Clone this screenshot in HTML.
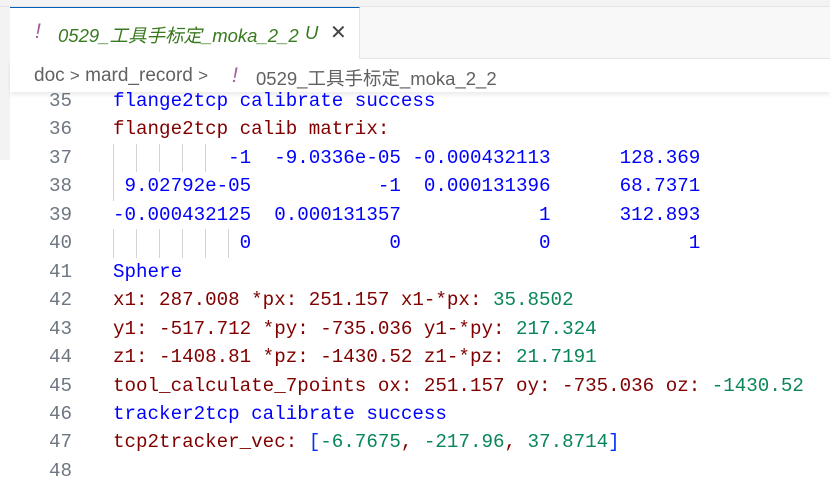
<!DOCTYPE html>
<html><head><meta charset="utf-8"><style>
body{margin:0;width:830px;height:480px;overflow:hidden;background:#fff;position:relative;font-family:"Liberation Sans","Noto Sans CJK SC",sans-serif}
.top{position:absolute;left:0;top:0;width:830px;height:6px;background:#f3f3f3;border-bottom:1px solid #e5e5e5}
.tabs{position:absolute;left:0;top:7px;width:830px;height:51px;background:#f8f8f8;border-bottom:1px solid #e5e5e5}
.tab{position:absolute;left:10px;top:0;width:350px;height:52px;background:#fff;border-top:1px solid #005fb8;border-right:1px solid #e5e5e5;box-sizing:border-box}
.tab .t{position:absolute;left:48px;top:14px;font-size:18.5px;font-style:italic;color:#387a1f;white-space:nowrap}
.ex{color:#a45ba0;font-style:italic;font-size:21px;position:absolute}
.x{position:absolute;left:320px;top:12px;font-size:20px;color:#444}
.bc{position:absolute;left:10px;top:59px;width:820px;height:33px;background:#fff;box-shadow:0 3px 4px rgba(0,0,0,0.08);font-size:19px;color:#616161;white-space:nowrap}
.left{position:absolute;left:0;top:7px;width:10px;height:153px;background:#f3f3f3}
.code{position:absolute;left:0;top:87px;font-family:"Liberation Mono",monospace;font-size:19.2px}
.ln{position:relative;height:28.46px;line-height:28.46px;white-space:pre}
.n{position:absolute;right:0;left:0;width:72px;text-align:right;color:#6e7681}
.c{position:absolute;left:113px}
.g{position:absolute;top:0;width:1px;height:28.46px;background:#d3d3d3}
.b{color:#0000ff}.r{color:#800000}.gr{color:#098658}.bk{color:#0431fa}
.ch{font-size:17px;color:#616161}
</style></head><body>
<div class="top"></div>
<div class="tabs"><div class="tab"><span class="ex" style="left:25px;top:12px">!</span><span class="t">0529_工具手标定_moka_2_2</span><span class="t" style="left:295px">U</span><span class="x">✕</span></div></div>
<div class="left"></div>
<div class="bc"><span style="position:absolute;left:24px;top:6px">doc <span class="ch">&gt;</span> mard_record <span class="ch">&gt;</span></span><span class="ex" style="left:222px;top:5px">!</span><span style="position:absolute;left:246px;top:6px;font-size:18.5px">0529_工具手标定_moka_2_2</span></div>
<div class="code">
<div class="ln"><span class="n">35</span><span class="c b">flange2tcp calibrate success</span></div>
<div class="ln"><span class="n">36</span><span class="c r">flange2tcp calib matrix:</span></div>
<div class="ln"><span class="n">37</span><i class="g" style="left:113px"></i><i class="g" style="left:136px"></i><i class="g" style="left:159px"></i><i class="g" style="left:182px"></i><i class="g" style="left:205px"></i><span class="c b">          -1  -9.0336e-05 -0.000432113      128.369</span></div>
<div class="ln"><span class="n">38</span><i class="g" style="left:113px"></i><span class="c b"> 9.02792e-05           -1  0.000131396      68.7371</span></div>
<div class="ln"><span class="n">39</span><span class="c b">-0.000432125  0.000131357            1      312.893</span></div>
<div class="ln"><span class="n">40</span><i class="g" style="left:113px"></i><i class="g" style="left:136px"></i><i class="g" style="left:159px"></i><i class="g" style="left:182px"></i><i class="g" style="left:205px"></i><i class="g" style="left:228px"></i><span class="c b">           0            0            0            1</span></div>
<div class="ln"><span class="n">41</span><span class="c b">Sphere</span></div>
<div class="ln"><span class="n">42</span><span class="c r">x1: 287.008 *px: 251.157 x1-*px: <span class="gr">35.8502</span></span></div>
<div class="ln"><span class="n">43</span><span class="c r">y1: -517.712 *py: -735.036 y1-*py: <span class="gr">217.324</span></span></div>
<div class="ln"><span class="n">44</span><span class="c r">z1: -1408.81 *pz: -1430.52 z1-*pz: <span class="gr">21.7191</span></span></div>
<div class="ln"><span class="n">45</span><span class="c r">tool_calculate_7points ox: 251.157 oy: -735.036 oz: <span class="gr">-1430.52</span></span></div>
<div class="ln"><span class="n">46</span><span class="c b">tracker2tcp calibrate success</span></div>
<div class="ln"><span class="n">47</span><span class="c r">tcp2tracker_vec: <span class="bk">[</span><span class="gr">-6.7675</span>, <span class="gr">-217.96</span>, <span class="gr">37.8714</span><span class="bk">]</span></span></div>
<div class="ln"><span class="n">48</span></div>
</div>
</body></html>
